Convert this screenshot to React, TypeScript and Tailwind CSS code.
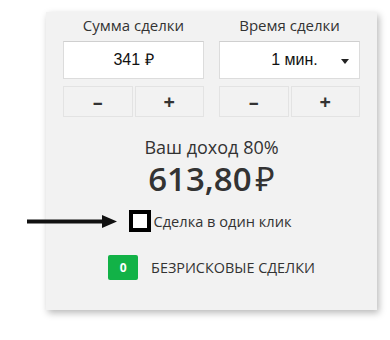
const sans = { fontFamily: '"Open Sans", "Noto Sans", sans-serif' }
const arial = { fontFamily: '"Liberation Sans", Arial, sans-serif' }

function Stepper() {
  return (
    <div className="mt-[7px] grid grid-cols-2 gap-[2px]">
      <button className="flex h-[31px] items-center justify-center border border-[#e3e3e3] bg-[#f2f2f2] text-[20px] font-bold leading-none text-[#333]">
        –
      </button>
      <button className="flex h-[31px] items-center justify-center border border-[#e3e3e3] bg-[#f2f2f2] text-[20px] font-bold leading-none text-[#333]">
        +
      </button>
    </div>
  )
}

export default function App() {
  return (
    <div className="relative h-[340px] w-[390px] bg-white pl-[46px] pt-[12px]" style={sans}>
      <div className="h-[298px] w-[331px] bg-[#f2f2f2] px-[17px] pt-[3px] shadow-[2px_3px_7px_rgba(0,0,0,0.28)]">
        <div className="grid grid-cols-2 gap-[15px]">
          <div>
            <div className="mb-[6px] text-center text-[15px] leading-[20px] text-[#333]">Сумма сделки</div>
            <div
              className="flex h-[38px] items-center justify-center border border-[#dcdcdc] border-t-[#cfcfcf] bg-white text-[16px] text-[#111]"
              style={arial}
            >
              341 ₽
            </div>
            <Stepper />
          </div>
          <div>
            <div className="mb-[6px] text-center text-[15px] leading-[20px] text-[#333]">Время сделки</div>
            <div
              className="relative flex h-[38px] items-center justify-center border border-[#dcdcdc] border-t-[#cfcfcf] bg-white pl-[10px] text-[16px] text-[#111]"
              style={arial}
            >
              1 мин.
              <span className="absolute right-[10px] top-[17px] h-0 w-0 border-x-[4px] border-t-[5px] border-x-transparent border-t-[#222]" />
            </div>
            <Stepper />
          </div>
        </div>

        <div className="mt-[18px] text-center text-[18px] leading-[25px] text-[#333]">Ваш доход 80%</div>
        <div className="mt-[1px] text-center text-[33px] font-semibold leading-[36px] text-[#333]">
          613,80<span className="ml-[4px] font-normal">₽</span>
        </div>

        <div className="mt-[13px] flex items-center justify-center gap-[3px] pr-[3px]">
          <span className="h-[22px] w-[22px] border-[4px] border-black bg-white" />
          <span className="text-[14.6px] leading-[20px] text-[#333]">Сделка в один клик</span>
        </div>

        <div className="mt-[23px] flex items-center justify-center gap-[13px]">
          <span className="flex h-[25px] w-[30px] items-center justify-center rounded-[2px] bg-[#12b247] text-[12px] font-bold text-white">
            0
          </span>
          <span className="text-[14.4px] leading-[20px] text-[#333]">БЕЗРИСКОВЫЕ СДЕЛКИ</span>
        </div>
      </div>

      <svg className="absolute left-[27px] top-[215px]" width="90" height="13" viewBox="0 0 90 13">
        <rect x="0" y="4.5" width="78" height="4" fill="#111" />
        <polygon points="75,0 90,6.5 75,13" fill="#111" />
      </svg>
    </div>
  )
}
